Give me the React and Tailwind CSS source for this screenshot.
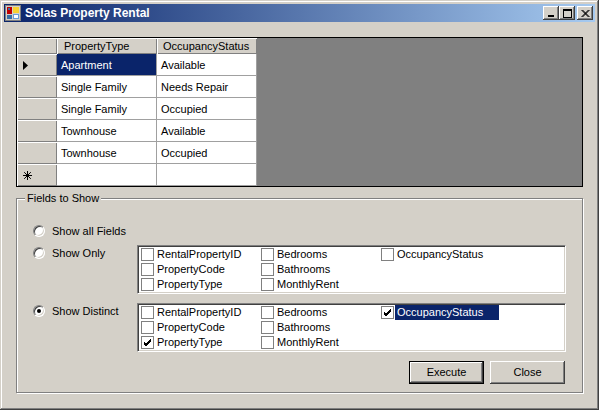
import React from 'react'

const rows = [
  ['Apartment', 'Available'],
  ['Single Family', 'Needs Repair'],
  ['Single Family', 'Occupied'],
  ['Townhouse', 'Available'],
  ['Townhouse', 'Occupied'],
]

const fieldCols = [
  ['RentalPropertyID', 'PropertyCode', 'PropertyType'],
  ['Bedrooms', 'Bathrooms', 'MonthlyRent'],
  ['OccupancyStatus'],
]

const raised = 'bg-[#d4d0c8] shadow-[inset_-1px_-1px_#404040,inset_1px_1px_#fff,inset_-2px_-2px_#808080,inset_2px_2px_#d4d0c8]'

function AppIcon() {
  return (
    <svg width="16" height="16" viewBox="0 0 16 16">
      <rect x="0.5" y="0.5" width="15" height="15" fill="#d4d0c8" stroke="#808080" />
      <rect x="2" y="2" width="5" height="7" fill="#c00000" />
      <rect x="3" y="3" width="2" height="2" fill="#3a6ea5" />
      <rect x="8" y="2" width="6" height="6" fill="#f8d030" />
      <rect x="2" y="10" width="5" height="4" fill="#3a6ea5" />
      <rect x="8" y="9" width="6" height="5" fill="#6a9ad8" />
      <rect x="9" y="10" width="4" height="3" fill="#ffffff" />
    </svg>
  )
}

function CaptionButton({ kind, className = '' }) {
  return (
    <div className={`w-[16px] h-[14px] flex items-center justify-center ${raised} ${className}`}>
      <svg width="10" height="9" viewBox="0 0 10 9">
        {kind === 'min' && <rect x="2" y="6" width="6" height="2" fill="#000" />}
        {kind === 'max' && (
          <>
            <rect x="1.5" y="0.5" width="8" height="8" fill="none" stroke="#000" />
            <rect x="1" y="0" width="9" height="2" fill="#000" />
          </>
        )}
        {kind === 'close' && (
          <path d="M1.5 1 L8.5 8 M2.5 1 L9.5 8 M8.5 1 L1.5 8 M9.5 1 L2.5 8" stroke="#000" strokeWidth="1" fill="none" />
        )}
      </svg>
    </div>
  )
}

function Radio({ checked, label }) {
  return (
    <div className="flex items-center h-[14px]">
      <div className="w-[12px] h-[12px] rounded-full bg-white border border-t-[#808080] border-l-[#808080] border-r-white border-b-white shadow-[inset_1px_1px_#404040,inset_-1px_-1px_#d4d0c8] flex items-center justify-center">
        {checked && <div className="w-[4px] h-[4px] rounded-full bg-black" />}
      </div>
      <span className="ml-[7px]">{label}</span>
    </div>
  )
}

function CheckBox({ checked }) {
  return (
    <div className="w-[13px] h-[13px] border border-[#808080] bg-white flex items-center justify-center shrink-0">
      {checked && (
        <svg width="9" height="9" viewBox="0 0 9 9">
          <path d="M1 4 L3 6 L8 1 M1 5 L3 7 L8 2 M1 6 L3 8 L8 3" stroke="#000" strokeWidth="1" fill="none" />
        </svg>
      )}
    </div>
  )
}

function FieldList({ checked = [], selected }) {
  return (
    <div className="w-[429px] h-[49px] bg-white border border-t-[#808080] border-l-[#808080] border-r-white border-b-white shadow-[inset_1px_1px_#404040,inset_-1px_-1px_#d4d0c8] p-[1px] flex">
      {fieldCols.map((col, ci) => (
        <div key={ci} className="w-[120px] flex flex-col">
          {col.map(f => (
            <div key={f} className="h-[15px] flex items-center pl-[2px]">
              <CheckBox checked={checked.includes(f)} />
              <span className={`ml-[1px] h-[15px] leading-[15px] pl-[2px] ${selected === f ? 'bg-[#0a246a] text-white w-[104px]' : ''}`}>{f}</span>
            </div>
          ))}
        </div>
      ))}
    </div>
  )
}

function RowHeader({ children }) {
  return (
    <div className="w-[40px] h-[22px] flex items-center pl-[6px] bg-[#d4d0c8] shadow-[inset_1px_1px_#fff,inset_-1px_-1px_#808080]">
      {children}
    </div>
  )
}

export default function App() {
  return (
    <div
      className="w-[599px] h-[410px] bg-[#d4d0c8] p-[4px] text-[11px] text-black shadow-[inset_-1px_-1px_#404040,inset_1px_1px_#d4d0c8,inset_-2px_-2px_#808080,inset_2px_2px_#fff]"
      style={{ fontFamily: '"Liberation Sans", Arial, sans-serif' }}
    >
      {/* Title bar */}
      <div className="h-[18px] flex items-center bg-[linear-gradient(to_right,#0a246a,#a6caf0)] pl-[1px] pr-[2px]">
        <AppIcon />
        <span className="ml-[4px] text-white font-bold text-[12px]">Solas Property Rental</span>
        <div className="ml-auto flex items-center">
          <CaptionButton kind="min" />
          <CaptionButton kind="max" />
          <CaptionButton kind="close" className="ml-[2px]" />
        </div>
      </div>

      {/* Data grid */}
      <div className="ml-[12px] mt-[15px] w-[567px] h-[150px] border border-black bg-[#808080] flex">
        <div className="flex flex-col bg-[#808080]">
          <div className="flex h-[16px]">
            <div className="w-[40px] h-[16px] bg-[#d4d0c8] shadow-[inset_1px_1px_#fff,inset_-1px_-1px_#808080]" />
            <div className="w-[100px] h-[16px] bg-[#d4d0c8] shadow-[inset_1px_1px_#fff,inset_-1px_-1px_#808080] pl-[7px] leading-[16px]">PropertyType</div>
            <div className="w-[100px] h-[16px] bg-[#d4d0c8] shadow-[inset_1px_1px_#fff,inset_-1px_-1px_#808080] pl-[6px] leading-[16px]">OccupancyStatus</div>
          </div>
          {rows.map((r, i) => (
            <div key={i} className="flex h-[22px]">
              <RowHeader>
                {i === 0 && (
                  <svg width="5" height="9" viewBox="0 0 5 9">
                    <polygon points="0,0 5,4.5 0,9" fill="#000" />
                  </svg>
                )}
              </RowHeader>
              <div className={`w-[100px] h-[22px] border-r border-b border-[#a0a0a0] pl-[4px] leading-[22px] ${i === 0 ? 'bg-[#0a246a] text-white' : 'bg-white'}`}>{r[0]}</div>
              <div className="w-[100px] h-[22px] border-r border-b border-[#a0a0a0] pl-[4px] leading-[22px] bg-white">{r[1]}</div>
            </div>
          ))}
          <div className="flex h-[22px]">
            <RowHeader>
              <svg width="9" height="9" viewBox="0 0 9 9">
                <path d="M4.5 0 V9 M0 4.5 H9 M1.2 1.2 L7.8 7.8 M7.8 1.2 L1.2 7.8" stroke="#000" strokeWidth="1" fill="none" />
              </svg>
            </RowHeader>
            <div className="w-[100px] h-[22px] border-r border-b border-[#a0a0a0] bg-white" />
            <div className="w-[100px] h-[22px] border-r border-b border-[#a0a0a0] bg-white" />
          </div>
        </div>
      </div>

      {/* Fields to Show group */}
      <div className="relative ml-[12px] mt-[11px] w-[567px] h-[195px] border border-[#808080] shadow-[inset_1px_1px_#fff,1px_1px_#fff] pl-[16px] pt-[25px]">
        <span className="absolute top-[-7px] left-[8px] px-[2px] h-[13px] leading-[13px] bg-[#d4d0c8]">Fields to Show</span>

        <Radio label="Show all Fields" />

        <div className="flex mt-[7px]">
          <div className="w-[104px] pt-[1px]">
            <Radio label="Show Only" />
          </div>
          <FieldList />
        </div>

        <div className="flex mt-[9px]">
          <div className="w-[104px] pt-[1px]">
            <Radio checked label="Show Distinct" />
          </div>
          <FieldList checked={['PropertyType', 'OccupancyStatus']} selected="OccupancyStatus" />
        </div>

        <div className="flex justify-end gap-[6px] mt-[9px] w-[532px]">
          <div className="w-[75px] h-[23px] border border-black">
            <div className={`w-full h-full flex items-center justify-center ${raised}`}>Execute</div>
          </div>
          <div className={`w-[75px] h-[23px] flex items-center justify-center ${raised}`}>Close</div>
        </div>
      </div>
    </div>
  )
}
